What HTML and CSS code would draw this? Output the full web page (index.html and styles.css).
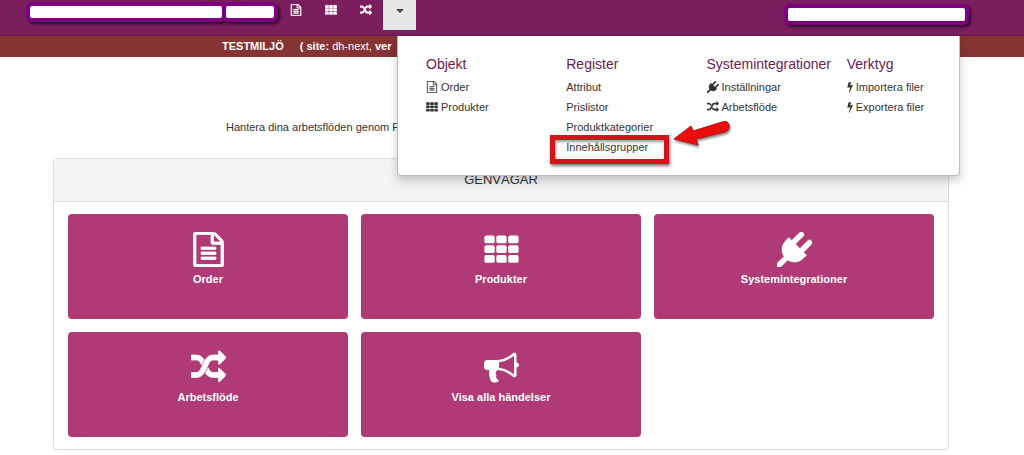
FILE: index.html
```html
<!DOCTYPE html>
<html lang="sv">
<head>
<meta charset="utf-8">
<title>Genvägar</title>
<link rel="stylesheet" href="styles.css">
</head>
<body>
<svg class="sprite" aria-hidden="true">
  <symbol id="file" viewBox="0 0 1792 1792"><path d="M1596 380q28 28 48 76t20 88v1152q0 40-28 68t-68 28h-1344q-40 0-68-28t-28-68v-1600q0-40 28-68t68-28h896q40 0 88 20t76 48zm-444-244v376h376q-10-29-22-41l-313-313q-12-12-41-22zm384 1528v-1024h-416q-40 0-68-28t-28-68v-416h-768v1536h1280zm-1024-864q0-14 9-23t23-9h704q14 0 23 9t9 23v64q0 14-9 23t-23 9h-704q-14 0-23-9t-9-23v-64zm736 224q14 0 23 9t9 23v64q0 14-9 23t-23 9h-704q-14 0-23-9t-9-23v-64q0-14 9-23t23-9h704zm0 256q14 0 23 9t9 23v64q0 14-9 23t-23 9h-704q-14 0-23-9t-9-23v-64q0-14 9-23t23-9h704z"/></symbol>
  <symbol id="grid" viewBox="0 0 1792 1792"><g id="grid-row"><rect x="20" y="180" width="530" height="400" rx="96"/><rect x="630" y="180" width="530" height="400" rx="96"/><rect x="1240" y="180" width="530" height="400" rx="96"/></g><use href="#grid-row" y="500"/><use href="#grid-row" y="1000"/></symbol>
  <symbol id="random" viewBox="0 0 1792 1792"><path d="M666 481q-60 92-137 273-22-45-37-72.5t-40.5-63.5-51-56.5-63-35-81.5-14.5h-224q-14 0-23-9t-9-23v-192q0-14 9-23t23-9h224q250 0 410 225zm1126 799q0 14-9 23l-320 320q-9 9-23 9-13 0-22.5-9.5t-9.5-22.5v-192q-32 0-85 .5t-81 1-73-1-71-5-64-10.5-63-18.5-58-28.5-59-40-55-53.5-56-69.5q59-93 136-273 22 45 37 72.5t40.5 63.5 51 56.5 63 35 81.5 14.5h256v-192q0-14 9-23t23-9q12 0 24 10l319 319q9 9 9 23zm0-896q0 14-9 23l-320 320q-9 9-23 9-13 0-22.5-9.5t-9.5-22.5v-192h-256q-48 0-87 15t-69 45-51 61.5-45 77.5q-32 62-78 171-29 66-49.5 111t-54 105-64 100-74 83-90 68.5-106.5 42-128 16.5h-224q-14 0-23-9t-9-23v-192q0-14 9-23t23-9h224q48 0 87-15t69-45 51-61.5 45-77.5q32-62 78-171 29-66 49.5-111t54-105 64-100 74-83 90-68.5 106.5-42 128-16.5h256v-192q0-14 9-23t23-9q12 0 24 10l319 319q9 9 9 23z"/></symbol>
  <symbol id="plug" viewBox="0 0 1792 1792"><path d="M1755 453q37 38 37 90.5t-37 90.5l-401 400 150 150-160 160q-163 163-389.5 186.5t-411.5-100.5l-362 362h-181v-181l362-362q-124-185-100.5-411.5t186.5-389.5l160-160 150 150 400-401q38-37 91-37t90 37 37 90.5-37 90.5l-400 401 234 234 401-400q38-37 91-37t90 37z"/></symbol>
  <symbol id="bullhorn" viewBox="0 0 1792 1792"><path d="M1664 640q53 0 90.5 37.5t37.5 90.5-37.5 90.5-90.5 37.5v384q0 52-38 90t-90 38q-417-347-812-380-58 19-91 66t-31 100.5 40 92.5q-20 33-23 65.5t6 58 33.5 55 48 50 61.5 50.5q-29 58-111.5 83t-168.5 11.5-132-55.5q-7-23-29.5-87.5t-32-94.5-23-89-15-101 3.5-98.5 22-110.5h-122q-66 0-113-47t-47-113v-192q0-66 47-113t113-47h480q435 0 896-384 52 0 90 38t38 90v384zm-128 604v-954q-394 302-768 343v270q377 42 768 341z"/></symbol>
  <symbol id="bolt" viewBox="400 0 960 1792"><path d="M1333 566q18 20 7 44l-540 1157q-13 25-42 25-4 0-14-2-17-5-25.5-19t-4.5-30l197-808-406 101q-4 1-12 1-18 0-31-11-18-15-13-39l201-825q4-14 16-23t28-9h328q19 0 32 12.5t13 29.5q0 8-5 18l-171 463 396-98q8-2 12-2 19 0 34 15z"/></symbol>
</svg>

<header class="header">
  <nav class="navbar" aria-label="Huvudmeny">
    <div class="mask mask-brand"></div>
    <div class="mask mask-small"></div>
    <a class="nav-link" href="#" aria-label="Order"><svg class="icon"><use href="#file"/></svg></a>
    <a class="nav-link" href="#" aria-label="Produkter"><svg class="icon"><use href="#grid"/></svg></a>
    <a class="nav-link" href="#" aria-label="Arbetsflöde"><svg class="icon"><use href="#random"/></svg></a>
    <button class="nav-toggle" type="button" aria-label="Meny" aria-expanded="true"><span class="caret"></span></button>
    <div class="mask mask-user"></div>
  </nav>
  <div class="env"><b>TESTMILJÖ</b><span><b>( site:</b> dh-next, <b>ver</b></span></div>

  <div class="menu">
    <section class="menu-col">
      <h2 class="menu-title">Objekt</h2>
      <a class="menu-link" href="#"><svg class="icon"><use href="#file"/></svg>Order</a>
      <a class="menu-link" href="#"><svg class="icon"><use href="#grid"/></svg>Produkter</a>
    </section>
    <section class="menu-col">
      <h2 class="menu-title">Register</h2>
      <a class="menu-link" href="#">Attribut</a>
      <a class="menu-link" href="#">Prislistor</a>
      <a class="menu-link" href="#">Produktkategorier</a>
      <a class="menu-link marked" href="#">Innehållsgrupper
        <svg class="arrow" viewBox="0 0 58 28" aria-hidden="true"><path d="M1 19L18 6L20 11L49 2Q55 0 56 5Q57 10 52 12L23 19L25 25Z"/></svg>
      </a>
    </section>
    <section class="menu-col">
      <h2 class="menu-title">Systemintegrationer</h2>
      <a class="menu-link" href="#"><svg class="icon"><use href="#plug"/></svg>Inställningar</a>
      <a class="menu-link" href="#"><svg class="icon"><use href="#random"/></svg>Arbetsflöde</a>
    </section>
    <section class="menu-col">
      <h2 class="menu-title">Verktyg</h2>
      <a class="menu-link" href="#"><svg class="icon icon-bolt"><use href="#bolt"/></svg>Importera filer</a>
      <a class="menu-link" href="#"><svg class="icon icon-bolt"><use href="#bolt"/></svg>Exportera filer</a>
    </section>
  </div>
</header>

<main class="page">
  <p class="intro">Hantera dina arbetsflöden genom P</p>
  <section class="panel">
    <h1 class="panel-title">GENVÄGAR</h1>
    <div class="tiles">
      <a class="tile" href="#"><svg class="tile-icon tile-icon-bold"><use href="#file"/></svg>Order</a>
      <a class="tile" href="#"><svg class="tile-icon"><use href="#grid"/></svg>Produkter</a>
      <a class="tile" href="#"><svg class="tile-icon tile-icon-bold"><use href="#plug"/></svg>Systemintegrationer</a>
      <a class="tile" href="#"><svg class="tile-icon tile-icon-bold"><use href="#random"/></svg>Arbetsflöde</a>
      <a class="tile" href="#"><svg class="tile-icon"><use href="#bullhorn"/></svg>Visa alla händelser</a>
    </div>
  </section>
</main>
</body>
</html>
```

FILE: styles.css
```css
*, *::before { box-sizing: border-box; }

body {
  margin: 0;
  background: #fff;
  color: #333;
  font: 11px/20px "Liberation Sans", Arial, sans-serif;
}

a { color: inherit; text-decoration: none; }

.sprite { position: absolute; width: 0; height: 0; }

.icon { width: 12px; height: 12px; fill: currentColor; flex: none; }
.icon-bolt { width: 6px; }

.header { position: relative; }

.navbar {
  display: flex;
  align-items: flex-start;
  height: 36px;
  padding: 0 55px 0 26px;
  background: #7b1e5e;
  border-bottom: 1px solid #6b1a4c;
  color: #fff;
}

.mask {
  height: 20px;
  margin-top: 2px;
  background: #fff;
  border: 4px solid #7d007d;
  border-radius: 6px;
  box-shadow: 2px 2px 3px #2d0a2c;
}
.mask-brand { width: 200px; }
.mask-small { width: 56px; margin-left: -4px; }
.mask-user { width: 185px; height: 21px; margin: 4px 0 0 auto; }

.nav-link {
  display: flex;
  justify-content: center;
  width: 35px;
  padding-top: 4px;
}
.nav-link .icon { stroke: currentColor; stroke-width: 60px; }

.nav-toggle {
  display: flex;
  justify-content: center;
  width: 33px;
  height: 30px;
  padding: 9px 0 0;
  border: 0;
  background: #e7e7e7;
}
.caret {
  border: 4px solid transparent;
  border-top-color: #444;
  border-bottom: 0;
}

.env {
  display: flex;
  gap: 16px;
  height: 21px;
  padding-left: 222px;
  background: #853333;
  color: #fff;
  font-size: 11px;
  white-space: nowrap;
}

.menu {
  position: absolute;
  z-index: 1;
  top: 36px;
  left: 397px;
  display: grid;
  grid-template-columns: repeat(4, 1fr);
  width: 563px;
  min-height: 140px;
  padding: 18px 0 16px;
  background: #fff;
  border: 1px solid #bbb;
  border-top: 0;
  border-radius: 0 0 4px 4px;
  box-shadow: 0 5px 10px rgba(0, 0, 0, 0.2);
}
.menu-col { min-width: 0; padding-left: 28px; }
.menu-title {
  margin: 0 0 3px;
  color: #6b2152;
  font-size: 14px;
  font-weight: 400;
  line-height: 20px;
  white-space: nowrap;
}
.menu-link {
  display: flex;
  align-items: center;
  gap: 3px;
  height: 20px;
  white-space: nowrap;
}

.marked { position: relative; width: max-content; }
.marked::before {
  content: "";
  position: absolute;
  top: -2px;
  left: -16px;
  width: 119px;
  height: 29px;
  border: 5px solid #d3151b;
  box-shadow: 1px 2px 3px #777, inset 1px 2px 3px #999;
}
.arrow {
  position: absolute;
  top: -17px;
  left: 107px;
  width: 58px;
  height: 28px;
  fill: #ee0d0d;
  stroke: #b51212;
  filter: drop-shadow(1px 2px 1px #888);
}

.page { padding: 60px 75px 6px 53px; }

.intro { margin: 0 0 21px; padding-left: 173px; }

.panel {
  border: 1px solid #ddd;
  border-radius: 4px;
}
.panel-title {
  margin: 0;
  padding: 11px 0;
  background: #f4f4f4;
  border-bottom: 1px solid #ddd;
  font-size: 13px;
  font-weight: 400;
  line-height: 20px;
  text-align: center;
}
.tiles {
  display: grid;
  grid-template-columns: repeat(3, 1fr);
  gap: 13px;
  padding: 12px 14px;
}
.tile {
  display: flex;
  flex-direction: column;
  align-items: center;
  gap: 2px;
  min-height: 105px;
  padding: 18px 8px;
  background: #af3a76;
  border-radius: 4px;
  color: #fff;
  font-weight: 700;
}
.tile-icon { width: 35px; height: 35px; fill: currentColor; }
.tile-icon-bold { stroke: currentColor; stroke-width: 40px; }
```
